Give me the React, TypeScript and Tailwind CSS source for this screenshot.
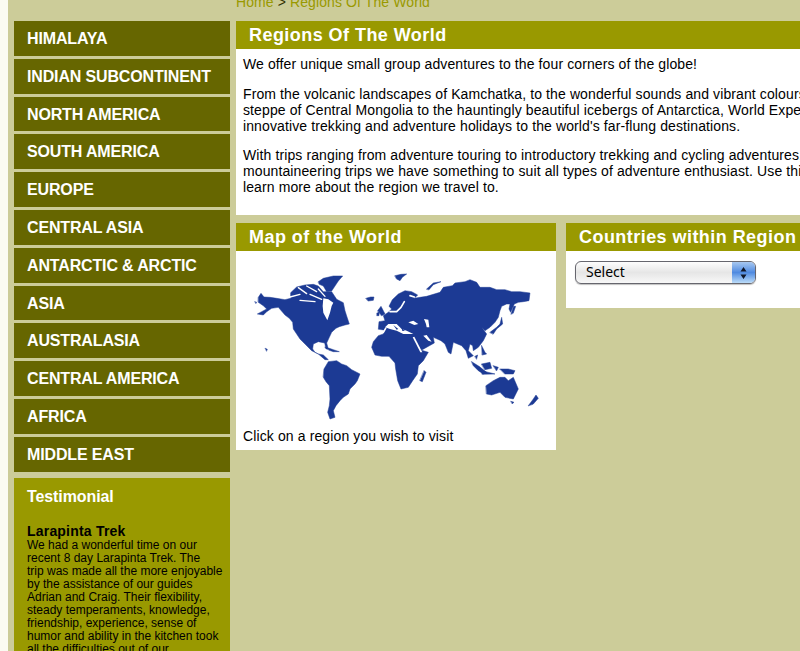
const blue = "#1c3a94";

const nav = ["HIMALAYA","INDIAN SUBCONTINENT","NORTH AMERICA","SOUTH AMERICA","EUROPE","CENTRAL ASIA","ANTARCTIC & ARCTIC","ASIA","AUSTRALASIA","CENTRAL AMERICA","AFRICA","MIDDLE EAST"];

const west = [
  "25,85 33,73 42,84 60,85 80,88 105,92 122,88 122,71 140,54 165,48 190,46 205,51 220,68 245,68 260,91 280,101 285,125 290,141 298,165 285,168 268,173 258,178 250,185 245,190 238,205 230,222 235,240 228,240 224,222 205,218 190,225 188,240 195,250 205,255 220,258 235,272 225,272 205,255 185,245 165,225 150,210 138,192 130,180 128,160 118,148 105,138 85,115 65,118 50,128 40,138 22,135 35,128 50,120 40,110 25,100",
  "205,38 220,28 250,21 278,21 265,36 255,51 245,66 230,68 220,51 208,46",
  "222,300 235,278 260,275 275,285 290,290 305,302 330,315 322,335 315,345 300,360 295,375 280,385 270,395 258,410 250,425 255,445 240,450 233,430 238,410 240,390 238,350 228,338 220,325",
  "225,235 238,238 250,242 268,248 250,248 238,244",
  "46,238 52,241 50,246",
  "348,88 362,84 372,84 370,94 355,96",
  "15,98 20,100 18,103",
];
const westSeas = ["220,88 235,91 250,101 245,111 240,131 232,154 220,131 218,111"];
const westCracks = ["120,84 150,76", "145,56 170,74", "170,51 200,68", "180,76 215,91", "150,94 195,98", "205,60 225,82"];

const east = [
  "40,180 42,158 60,155 55,140 70,130 80,120 72,112 82,92 100,75 120,65 140,68 158,78 148,88 165,85 185,82 225,70 235,55 262,50 270,42 300,38 315,32 335,40 345,55 375,55 395,62 420,62 440,68 465,68 495,72 492,95 475,98 460,100 448,105 437,130 432,120 435,105 425,105 410,112 405,125 400,145 390,160 375,175 360,185 350,175 365,195 355,215 340,235 325,245 323,230 315,225 310,245 325,260 310,268 303,245 290,230 265,220 258,255 250,250 240,225 228,215 205,205 208,222 172,242 165,242 190,250 175,275 160,290 157,315 143,335 130,355 108,360 98,335 92,300 90,282 72,262 50,262 30,258 20,235 25,218 40,200 55,195 58,184",
  "178,305 183,310 172,338 165,335",
  "38,125 48,112 60,135 50,140",
  "36,132 42,130 42,140 36,140",
  "90,20 108,16 125,15 112,25 105,35 95,30",
  "185,60 205,42 228,38 205,47 192,62",
  "375,190 395,175 405,165 410,145 413,165 395,180 385,195",
  "438,135 446,112 452,112 445,132",
  "320,278 342,292 365,310 355,315 340,305 325,290",
  "350,285 375,280 380,298 360,302",
  "350,230 360,250 365,255 352,258",
  "405,300 430,300 450,305 445,315 420,315",
  "385,290 400,295 395,305",
  "350,305 390,315 352,316",
  "330,262 338,258 335,270",
  "363,350 385,335 405,325 420,325 430,335 445,325 460,360 445,390 420,385 405,370 380,378 365,375",
  "438,397 447,400 442,404",
  "490,410 505,390 513,378 520,388 505,405",
];
const eastSeas = [
  "60,175 70,165 95,165 110,180 125,185 145,195 115,195 95,185 75,180",
  "130,160 145,155 160,165 148,168",
  "177,150 190,152 193,175 185,175 183,165",
  "143,205 148,203 172,250 166,250",
  "175,200 185,198 200,218 190,215",
];
const eastLand = ["85,168 100,180 95,182", "110,178 120,185 112,186"];
const eastCracks = ["75,128 95,128 108,115 118,98", "55,190 62,178", "148,84 135,80"];

function WorldMap() {
  return (
    <svg viewBox="236 252 320 170" className="block w-[320px] h-[170px]">
      <g transform="translate(250 270) scale(0.3333)" strokeLinejoin="round" strokeLinecap="round">
        {west.map((p, i) => <polygon key={i} points={p} fill={blue} stroke={blue} strokeWidth="1.5" />)}
        {westSeas.map((p, i) => <polygon key={i} points={p} fill="#ffffff" />)}
        {westCracks.map((p, i) => <polyline key={i} points={p} fill="none" stroke="#ffffff" strokeWidth="4" />)}
      </g>
      <g transform="translate(365 270) scale(0.3333)" strokeLinejoin="round" strokeLinecap="round">
        {east.map((p, i) => <polygon key={i} points={p} fill={blue} stroke={blue} strokeWidth="1.5" />)}
        {eastSeas.map((p, i) => <polygon key={i} points={p} fill="#ffffff" />)}
        {eastLand.map((p, i) => <polygon key={i} points={p} fill={blue} />)}
        {eastCracks.map((p, i) => <polyline key={i} points={p} fill="none" stroke="#ffffff" strokeWidth="5" />)}
      </g>
    </svg>
  );
}

function Bar({ children }: { children: React.ReactNode }) {
  return (
    <div className="h-[28px] bg-[#999900] pl-[13px] text-[18px] font-bold leading-[29px] tracking-[0.45px] text-white whitespace-nowrap">
      {children}
    </div>
  );
}

export default function App() {
  return (
    <div className="flex h-[651px] w-[800px] overflow-hidden bg-[#cccc99] font-['Liberation_Sans',Arial,sans-serif] text-black">
      <div className="w-2 shrink-0 bg-[#fbfbf2]" />
      <aside className="ml-[6px] mt-[21px] w-[216px] shrink-0">
        <nav className="flex flex-col gap-[3px]">
          {nav.map((n) => (
            <a key={n} className="block h-[34.8px] bg-[#666600] pl-[13px] text-[16px] font-bold leading-[36.4px] tracking-[-0.15px] text-white whitespace-nowrap">{n}</a>
          ))}
        </nav>
        <div className="mt-[6px] h-[300px] bg-[#999900] pl-[13px] pr-1 pt-[10px]">
          <h3 className="text-[16px] font-bold leading-[18px] tracking-[-0.1px] text-white">Testimonial</h3>
          <h4 className="mt-[18px] text-[14px] font-bold leading-[15px] tracking-[0.2px]">Larapinta Trek</h4>
          <p className="text-[12px] leading-[13.1px]">
            We had a wonderful time on our<br />recent 8 day Larapinta Trek. The<br />trip was made all the more enjoyable<br />by the assistance of our guides<br />Adrian and Craig. Their flexibility,<br />steady temperaments, knowledge,<br />friendship, experience, sense of<br />humor and ability in the kitchen took<br />all the difficulties out of our
          </p>
        </div>
      </aside>
      <main className="ml-[6px] min-w-0 flex-1">
        <div className="h-[21px] overflow-hidden">
          <div className="-mt-[5px] text-[14px] leading-[15px] tracking-[0.1px] text-[#999900]">
            Home <span className="text-[#333300]">&gt;</span> Regions Of The World
          </div>
        </div>
        <section>
          <Bar>Regions Of The World</Bar>
          <div className="h-[166px] overflow-hidden bg-white pl-[7px] pt-[7px] text-[14px] leading-[16px] tracking-[0.11px] whitespace-nowrap">
            <p>We offer unique small group adventures to the four corners of the globe!</p>
            <p className="mt-[14px]">From the volcanic landscapes of Kamchatka, to the wonderful sounds and vibrant colours of the<br />steppe of Central Mongolia to the hauntingly beautiful icebergs of Antarctica, World Expeditions offers<br />innovative trekking and adventure holidays to the world's far-flung destinations.</p>
            <p className="mt-[13px]">With trips ranging from adventure touring to introductory trekking and cycling adventures,<br />mountaineering trips we have something to suit all types of adventure enthusiast. Use this<br />learn more about the region we travel to.</p>
          </div>
        </section>
        <div className="mt-[8px] flex gap-[10px]">
          <section className="w-[320px] shrink-0 self-start">
            <Bar>Map of the World</Bar>
            <div className="h-[199px] bg-white">
              <WorldMap />
              <p className="pl-[7px] pt-[7px] text-[14px] leading-[16px] tracking-[0.12px]">Click on a region you wish to visit</p>
            </div>
          </section>
          <section className="min-w-0 flex-1 self-start">
            <Bar>Countries within Region</Bar>
            <div className="h-[57px] bg-white pl-[9px] pt-[10px]">
              <div className="relative h-[23px] w-[181px] overflow-hidden rounded-[6px] border border-[#66666e] bg-gradient-to-b from-[#fdfdfd] via-[#e6e6e6] to-[#f8f8f8] pl-[10px] font-['Noto_Sans',sans-serif] text-[14px] leading-[20px] shadow-[0_1px_1px_rgba(0,0,0,0.25)]">
                Select
                <div className="absolute inset-y-0 right-0 flex w-[23px] items-center justify-center bg-gradient-to-b from-[#a8c8f0] via-[#4f8ae0] to-[#bcdcf8]">
                  <svg viewBox="0 0 9 14" className="h-[14px] w-[9px]" fill="#10182a"><path d="M4.5 1 7.5 5.5h-6zM4.5 13 1.5 8.5h6z" /></svg>
                </div>
              </div>
            </div>
          </section>
        </div>
      </main>
    </div>
  );
}
